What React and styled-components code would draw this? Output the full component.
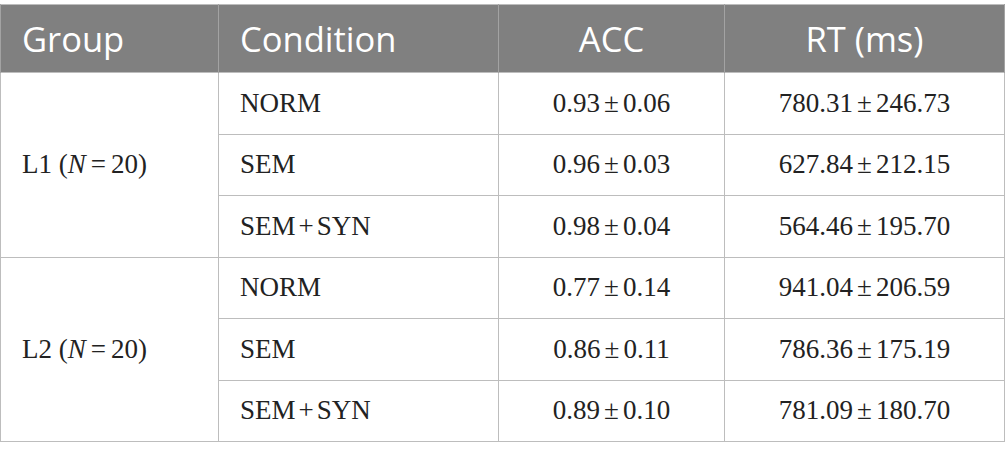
import styled, { createGlobalStyle } from "styled-components";

const Global = createGlobalStyle`
  html, body {
    margin: 0;
    padding: 0;
    background: #fff;
  }
`;

const Wrap = styled.div`
  padding-top: 4px;
`;

const Table = styled.table`
  width: 1005px;
  border-collapse: collapse;
  table-layout: fixed;
  border: 1px solid #bdbdbd;
`;

const Head = styled.th`
  background: #808080;
  color: #fff;
  font-family: "Open Sans", sans-serif;
  font-weight: 400;
  font-size: 34.5px;
  height: 67px;
  padding: 0 0 0 ${(p) => (p.center ? 0 : 21)}px;
  text-align: ${(p) => (p.center ? "center" : "left")};
  border: 1px solid #a3a3a3;
  border-top: none;
  border-bottom: none;
  white-space: nowrap;
`;

const Row = styled.tr`
  height: 61.5px;
`;

const Cell = styled.td`
  font-family: "Liberation Serif", "Times New Roman", serif;
  font-size: 27px;
  color: #222;
  padding: 0 0 0 ${(p) => (p.center ? 0 : 21)}px;
  text-align: ${(p) => (p.center ? "center" : "left")};
  border: 1px solid #bdbdbd;
  white-space: nowrap;
`;

const Sign = styled.span`
  margin: 0 ${(p) => p.gap ?? 4}px;
`;

const groups = [
  {
    label: "L1",
    rows: [
      ["NORM", "0.93", "0.06", "780.31", "246.73"],
      ["SEM", "0.96", "0.03", "627.84", "212.15"],
      ["SEM + SYN", "0.98", "0.04", "564.46", "195.70"],
    ],
  },
  {
    label: "L2",
    rows: [
      ["NORM", "0.77", "0.14", "941.04", "206.59"],
      ["SEM", "0.86", "0.11", "786.36", "175.19"],
      ["SEM + SYN", "0.89", "0.10", "781.09", "180.70"],
    ],
  },
];

function Condition({ text }) {
  const parts = text.split(" + ");
  if (parts.length === 1) return text;
  return (
    <>
      {parts[0]}
      <Sign gap={3}>+</Sign>
      {parts[1]}
    </>
  );
}

function Value({ mean, sd }) {
  return (
    <>
      {mean}
      <Sign>±</Sign>
      {sd}
    </>
  );
}

export default function App() {
  return (
    <Wrap>
      <Global />
      <Table>
        <colgroup>
          <col style={{ width: 218 }} />
          <col style={{ width: 280 }} />
          <col style={{ width: 226 }} />
          <col />
        </colgroup>
        <thead>
          <tr>
            <Head>Group</Head>
            <Head>Condition</Head>
            <Head center>ACC</Head>
            <Head center>RT (ms)</Head>
          </tr>
        </thead>
        <tbody>
          {groups.map((g) =>
            g.rows.map((r, i) => (
              <Row key={g.label + r[0]}>
                {i === 0 && (
                  <Cell rowSpan={3}>
                    {g.label} (<i>N</i>
                    <Sign gap={5}>=</Sign>20)
                  </Cell>
                )}
                <Cell>
                  <Condition text={r[0]} />
                </Cell>
                <Cell center>
                  <Value mean={r[1]} sd={r[2]} />
                </Cell>
                <Cell center>
                  <Value mean={r[3]} sd={r[4]} />
                </Cell>
              </Row>
            ))
          )}
        </tbody>
      </Table>
    </Wrap>
  );
}
